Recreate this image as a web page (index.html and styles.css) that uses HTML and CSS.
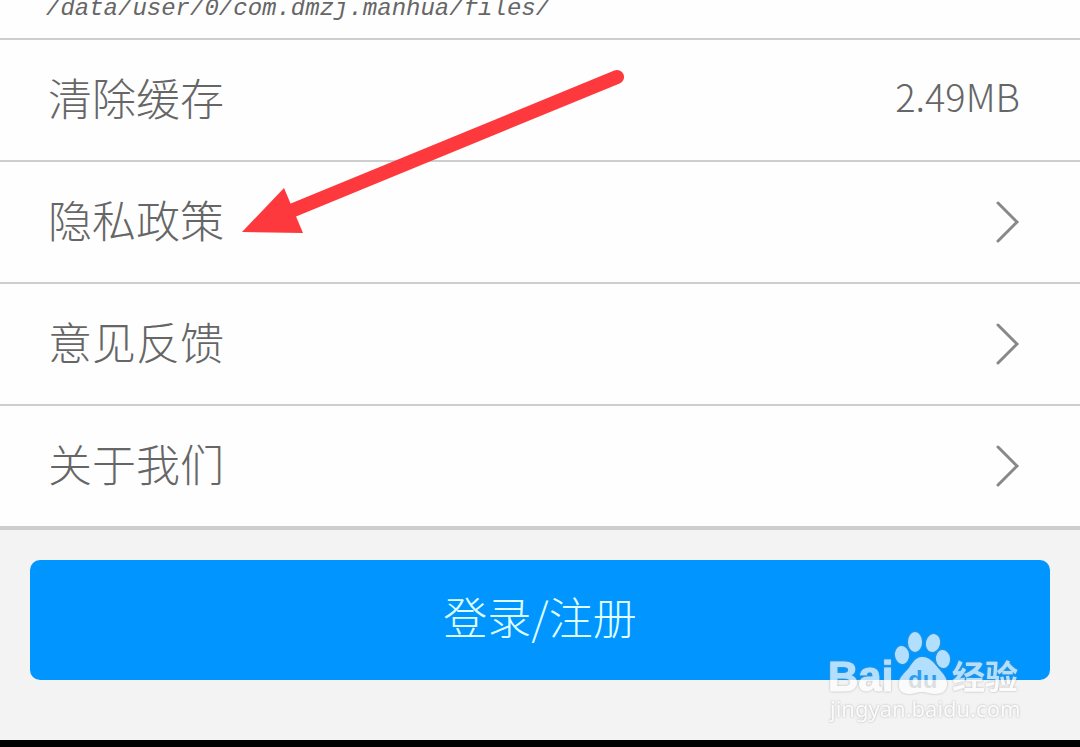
FILE: index.html
```html
<!DOCTYPE html>
<html lang="zh-CN">
<head>
    <meta charset="UTF-8">
    <meta name="viewport" content="width=device-width, initial-scale=1.0">
    <title>设置</title>
    <link rel="stylesheet" href="styles.css">
</head>
<body>
    <main class="settings">
        <div class="path-row">/data/user/0/com.dmzj.manhua/files/</div>
        <button class="row" type="button">
            <span class="row-label">清除缓存</span>
            <span class="row-value">2.49MB</span>
        </button>
        <a class="row" href="#privacy">
            <span class="row-label">隐私政策</span>
            <svg class="chevron" viewBox="0 0 24 42"><path d="M2 2 L21 21 L2 40"/></svg>
        </a>
        <a class="row" href="#feedback">
            <span class="row-label">意见反馈</span>
            <svg class="chevron" viewBox="0 0 24 42"><path d="M2 2 L21 21 L2 40"/></svg>
        </a>
        <a class="row" href="#about">
            <span class="row-label">关于我们</span>
            <svg class="chevron" viewBox="0 0 24 42"><path d="M2 2 L21 21 L2 40"/></svg>
        </a>
        <svg class="arrow" viewBox="0 0 384 166">
            <path class="arrow-line" d="M50 142 L376 8"/>
            <path class="arrow-head" d="M1 163 L43 119 L62 164 Z"/>
        </svg>
    </main>

    <section class="account">
        <button class="login-button" type="button">登录/注册</button>
        <svg class="watermark" viewBox="0 0 200 94">
            <defs>
                <linearGradient id="du-fill" gradientUnits="userSpaceOnUse" x1="0" y1="40" x2="0" y2="60">
                    <stop offset="0.5" stop-color="#2b9df0"/>
                    <stop offset="0.5" stop-color="#dcdfe2"/>
                </linearGradient>
            </defs>
            <g class="watermark-fill">
                <ellipse cx="74" cy="25" rx="7" ry="9" transform="rotate(-8 74 25)"/>
                <ellipse cx="87" cy="12" rx="7" ry="10"/>
                <ellipse cx="105" cy="13" rx="7" ry="9" transform="rotate(12 105 13)"/>
                <ellipse cx="115" cy="29" rx="7" ry="9" transform="rotate(-8 115 29)"/>
                <path d="M94 27 C102 27 106 33 110 38 C115 44 119 47 119 54 C119 61 114 64 107 64 C102 64 98 62 94 62 C90 62 86 64 81 64 C74 64 70 60 71 53 C71 47 77 43 81 38 C85 32 88 27 94 27 Z"/>
                <text class="watermark-brand" x="0" y="61">Bai</text>
                <text class="watermark-name" x="124" y="59">经验</text>
                <text class="watermark-url" x="2" y="87">jingyan.baidu.com</text>
            </g>
            <text class="watermark-du" x="80" y="58" fill="url(#du-fill)">du</text>
        </svg>
    </section>
    <footer class="nav-bar"></footer>
</body>
</html>
```
FILE: styles.css
```css
body {
    margin: 0;
    min-height: 100vh;
    display: flex;
    flex-direction: column;
    background-color: #f3f3f3;
    font-family: "Noto Sans CJK SC", sans-serif;
    font-weight: 300;
    color: #666;
}
.settings {
    position: relative;
    background-color: #fefefe;
    border-bottom: 4px solid #cecece;
}
.path-row {
    display: flex;
    align-items: flex-end;
    height: 23px;
    padding: 0 46px 15px;
    overflow: hidden;
    font-family: "Liberation Mono", monospace;
    font-size: 24px;
    font-style: italic;
    line-height: 28px;
}
.row {
    display: flex;
    align-items: center;
    justify-content: space-between;
    box-sizing: border-box;
    width: 100%;
    height: 122px;
    padding: 0 60px 0 48px;
    border: 0;
    border-top: 2px solid #cecece;
    background: none;
    color: inherit;
    font-family: inherit;
    font-size: 44px;
    font-weight: inherit;
    text-decoration: none;
    cursor: pointer;
}
.row-label {
    padding-bottom: 6px;
}
.row-value {
    padding-bottom: 10px;
    font-size: 38px;
}
.chevron {
    width: 24px;
    height: 42px;
    fill: none;
    stroke: #888;
    stroke-width: 3;
    stroke-linecap: round;
}
.arrow {
    position: absolute;
    top: 69px;
    left: 241px;
    width: 384px;
    height: 166px;
    pointer-events: none;
}
.arrow-line {
    stroke: #fd393d;
    stroke-width: 14;
    stroke-linecap: round;
}
.arrow-head {
    fill: #fd393d;
}
.account {
    position: relative;
    flex: 1;
    padding: 30px 30px 60px;
}
.login-button {
    display: block;
    width: 100%;
    height: 120px;
    padding: 0 0 8px;
    border: 0;
    border-radius: 10px;
    background-color: #0095ff;
    color: #dff;
    font-family: inherit;
    font-size: 44px;
    font-weight: inherit;
    cursor: pointer;
}
.watermark {
    position: absolute;
    right: 52px;
    bottom: 16px;
    width: 200px;
    height: 94px;
    pointer-events: none;
}
.watermark-fill {
    fill: #fff;
    opacity: 0.7;
    filter: drop-shadow(0 0 1px #999);
}
.watermark-brand {
    font-family: "Liberation Sans", sans-serif;
    font-size: 42px;
    font-weight: bold;
    stroke: #fff;
    stroke-width: 1;
}
.watermark-name {
    font-size: 33px;
    font-weight: bold;
}
.watermark-url {
    font-family: "Noto Sans", sans-serif;
    font-size: 22px;
    font-weight: normal;
}
.watermark-du {
    font-family: "Liberation Sans", sans-serif;
    font-size: 24px;
    font-weight: bold;
}
.nav-bar {
    height: 7px;
    background-color: #000;
}
```
